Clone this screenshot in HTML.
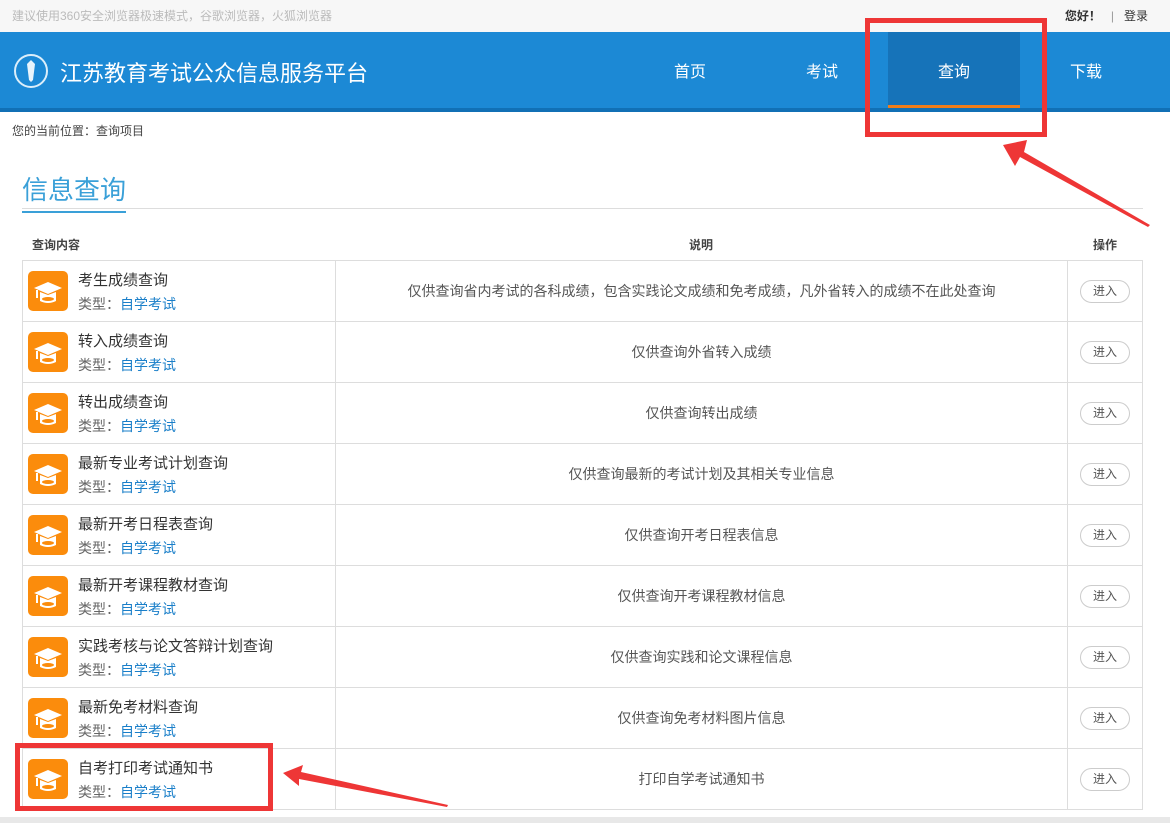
<!DOCTYPE html>
<html><head><meta charset="utf-8"><style>
*{margin:0;padding:0;box-sizing:border-box}
body{width:1170px;height:823px;overflow:hidden;background:#fff;font-family:"Liberation Sans","Noto Sans CJK SC",sans-serif;position:relative;color:#333}
.top{height:32px;background:#f7f7f7;font-size:12px;color:#bbb;line-height:32px;padding-left:12px;position:relative}
.top .r{position:absolute;right:22px;top:0;color:#333}
.hd{position:absolute;top:32px;left:0;width:1170px;height:80px;background:#1c89d5;border-bottom:4px solid #1170b5}
.logo{position:absolute;left:14px;top:22px;width:34px;height:34px;border:2px solid #dbeefa;border-radius:50%}
.title{position:absolute;left:60px;top:24px;color:#fff;font-size:22px}
.nav{position:absolute;top:0;height:76px;width:132px;text-align:center;line-height:82px;color:#fff;font-size:16px}
.nav.a{background:#1673b9;border-bottom:3px solid #f07d1a}
.crumb{position:absolute;top:122px;left:12px;font-size:12px;color:#444}
.h1{position:absolute;left:22px;top:170px;font-size:26px;color:#3aa0d8;padding-bottom:4px;border-bottom:2px solid #3aa0d8}
.hl{position:absolute;left:22px;top:208px;width:1121px;border-top:1px solid #ddd}
.th{position:absolute;top:236px;font-size:12px;color:#444;font-weight:bold}
table{position:absolute;left:22px;top:260px;border-collapse:collapse;width:1121px}
td{border:1px solid #ddd;height:61px;font-size:14px;color:#555}
td.c1{width:313px;position:relative}
td.c2{text-align:center}
td.c3{width:75px;text-align:center}
.ic{position:absolute;left:5px;top:10px;width:40px;height:40px;background:#fb8c0c;border-radius:5px}
.n{position:absolute;left:55px;top:8px;font-size:15px;color:#333}
.t{position:absolute;left:55px;top:33px;font-size:14px;color:#666}
.t b{font-weight:normal;color:#1a7fc9}
.btn{display:inline-block;width:50px;height:23px;border:1px solid #ccc;border-radius:12px;line-height:21px;font-size:12px;color:#555}
.bot{position:absolute;left:0;top:817px;width:1170px;height:6px;background:#e8e8e8}
.rb{position:absolute;border:5px solid #ee3636}
</style></head><body>
<div class="top">建议使用360安全浏览器极速模式，谷歌浏览器，火狐浏览器<span class="r"><b>您好！</b>&nbsp;&nbsp;&nbsp;<span style="color:#999">|</span>&nbsp;&nbsp;&nbsp;登录</span></div>
<div class="hd">
<div class="logo"><svg width="30" height="30" viewBox="0 0 30 30"><path d="M15 4 L19 8 L17 24 L15 26 L13 24 L11 8Z" fill="#e8f4fc"/></svg></div>
<div class="title">江苏教育考试公众信息服务平台</div>
<div class="nav" style="left:624px">首页</div>
<div class="nav" style="left:756px">考试</div>
<div class="nav a" style="left:888px">查询</div>
<div class="nav" style="left:1020px">下载</div>
</div>
<div class="crumb">您的当前位置：查询项目</div>
<div class="h1">信息查询</div>
<div class="hl"></div>
<div class="th" style="left:32px">查询内容</div>
<div class="th" style="left:689px">说明</div>
<div class="th" style="left:1093px">操作</div>
<table>
<tr><td class="c1"><div class="ic"><svg width="40" height="40"><path d="M6 17 L20 11 L34 17 L20 23Z" fill="#fff"/><path d="M12 21 v9 q8 4 16 0 v-9 l-8 3z" fill="#fff"/><ellipse cx="20" cy="28" rx="6" ry="2" fill="#fb8c0c"/><rect x="8" y="19" width="2" height="8" fill="#fff"/></svg></div><div class="n">考生成绩查询</div><div class="t">类型：<b>自学考试</b></div></td><td class="c2">仅供查询省内考试的各科成绩，包含实践论文成绩和免考成绩，凡外省转入的成绩不在此处查询</td><td class="c3"><span class="btn">进入</span></td></tr>
<tr><td class="c1"><div class="ic"><svg width="40" height="40"><path d="M6 17 L20 11 L34 17 L20 23Z" fill="#fff"/><path d="M12 21 v9 q8 4 16 0 v-9 l-8 3z" fill="#fff"/><ellipse cx="20" cy="28" rx="6" ry="2" fill="#fb8c0c"/><rect x="8" y="19" width="2" height="8" fill="#fff"/></svg></div><div class="n">转入成绩查询</div><div class="t">类型：<b>自学考试</b></div></td><td class="c2">仅供查询外省转入成绩</td><td class="c3"><span class="btn">进入</span></td></tr>
<tr><td class="c1"><div class="ic"><svg width="40" height="40"><path d="M6 17 L20 11 L34 17 L20 23Z" fill="#fff"/><path d="M12 21 v9 q8 4 16 0 v-9 l-8 3z" fill="#fff"/><ellipse cx="20" cy="28" rx="6" ry="2" fill="#fb8c0c"/><rect x="8" y="19" width="2" height="8" fill="#fff"/></svg></div><div class="n">转出成绩查询</div><div class="t">类型：<b>自学考试</b></div></td><td class="c2">仅供查询转出成绩</td><td class="c3"><span class="btn">进入</span></td></tr>
<tr><td class="c1"><div class="ic"><svg width="40" height="40"><path d="M6 17 L20 11 L34 17 L20 23Z" fill="#fff"/><path d="M12 21 v9 q8 4 16 0 v-9 l-8 3z" fill="#fff"/><ellipse cx="20" cy="28" rx="6" ry="2" fill="#fb8c0c"/><rect x="8" y="19" width="2" height="8" fill="#fff"/></svg></div><div class="n">最新专业考试计划查询</div><div class="t">类型：<b>自学考试</b></div></td><td class="c2">仅供查询最新的考试计划及其相关专业信息</td><td class="c3"><span class="btn">进入</span></td></tr>
<tr><td class="c1"><div class="ic"><svg width="40" height="40"><path d="M6 17 L20 11 L34 17 L20 23Z" fill="#fff"/><path d="M12 21 v9 q8 4 16 0 v-9 l-8 3z" fill="#fff"/><ellipse cx="20" cy="28" rx="6" ry="2" fill="#fb8c0c"/><rect x="8" y="19" width="2" height="8" fill="#fff"/></svg></div><div class="n">最新开考日程表查询</div><div class="t">类型：<b>自学考试</b></div></td><td class="c2">仅供查询开考日程表信息</td><td class="c3"><span class="btn">进入</span></td></tr>
<tr><td class="c1"><div class="ic"><svg width="40" height="40"><path d="M6 17 L20 11 L34 17 L20 23Z" fill="#fff"/><path d="M12 21 v9 q8 4 16 0 v-9 l-8 3z" fill="#fff"/><ellipse cx="20" cy="28" rx="6" ry="2" fill="#fb8c0c"/><rect x="8" y="19" width="2" height="8" fill="#fff"/></svg></div><div class="n">最新开考课程教材查询</div><div class="t">类型：<b>自学考试</b></div></td><td class="c2">仅供查询开考课程教材信息</td><td class="c3"><span class="btn">进入</span></td></tr>
<tr><td class="c1"><div class="ic"><svg width="40" height="40"><path d="M6 17 L20 11 L34 17 L20 23Z" fill="#fff"/><path d="M12 21 v9 q8 4 16 0 v-9 l-8 3z" fill="#fff"/><ellipse cx="20" cy="28" rx="6" ry="2" fill="#fb8c0c"/><rect x="8" y="19" width="2" height="8" fill="#fff"/></svg></div><div class="n">实践考核与论文答辩计划查询</div><div class="t">类型：<b>自学考试</b></div></td><td class="c2">仅供查询实践和论文课程信息</td><td class="c3"><span class="btn">进入</span></td></tr>
<tr><td class="c1"><div class="ic"><svg width="40" height="40"><path d="M6 17 L20 11 L34 17 L20 23Z" fill="#fff"/><path d="M12 21 v9 q8 4 16 0 v-9 l-8 3z" fill="#fff"/><ellipse cx="20" cy="28" rx="6" ry="2" fill="#fb8c0c"/><rect x="8" y="19" width="2" height="8" fill="#fff"/></svg></div><div class="n">最新免考材料查询</div><div class="t">类型：<b>自学考试</b></div></td><td class="c2">仅供查询免考材料图片信息</td><td class="c3"><span class="btn">进入</span></td></tr>
<tr><td class="c1"><div class="ic"><svg width="40" height="40"><path d="M6 17 L20 11 L34 17 L20 23Z" fill="#fff"/><path d="M12 21 v9 q8 4 16 0 v-9 l-8 3z" fill="#fff"/><ellipse cx="20" cy="28" rx="6" ry="2" fill="#fb8c0c"/><rect x="8" y="19" width="2" height="8" fill="#fff"/></svg></div><div class="n">自考打印考试通知书</div><div class="t">类型：<b>自学考试</b></div></td><td class="c2">打印自学考试通知书</td><td class="c3"><span class="btn">进入</span></td></tr>
</table>
<div class="bot"></div>
<div class="rb" style="left:865px;top:18px;width:182px;height:119px"></div>
<div class="rb" style="left:15px;top:743px;width:258px;height:68px"></div>
<svg style="position:absolute;left:0;top:0" width="1170" height="823">
<polygon points="1003,145 1027,140 1024,152 1150,225 1148,227 1020,157 1015,166" fill="#ee3636"/>
<polygon points="283,773 303,765 301,772 448,805 447,807 299,779 299,786" fill="#ee3636"/>
</svg>
</body></html>
